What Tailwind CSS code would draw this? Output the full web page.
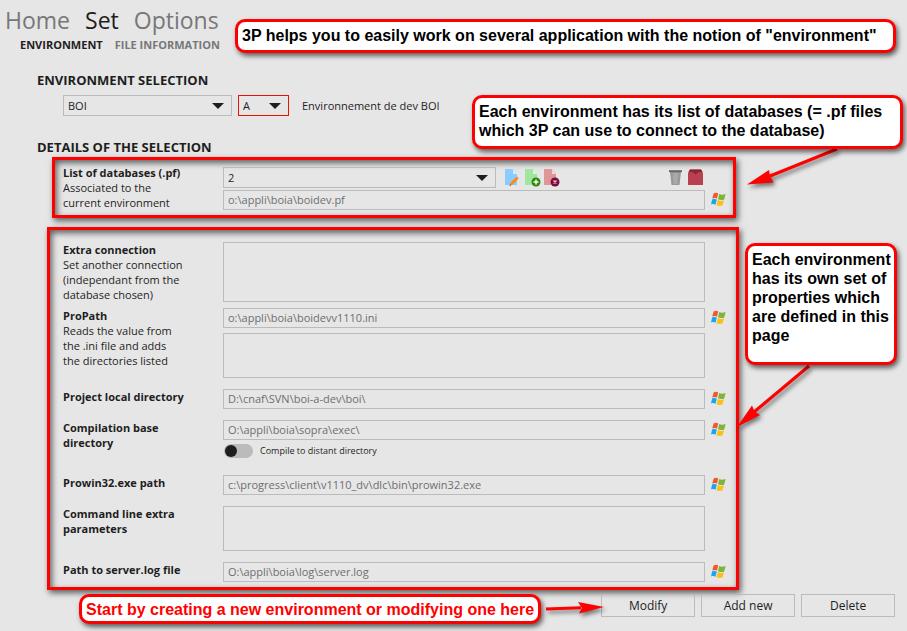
<!DOCTYPE html>
<html lang="en">
<head>
<meta charset="utf-8">
<meta name="viewport" content="width=device-width, initial-scale=1">
<title>3P - Set environment</title>
<script src="https://cdn.jsdelivr.net/npm/@tailwindcss/browser@4"></script>
</head>
<body class="relative min-h-screen bg-[#e6e6e6] font-['Open_Sans',sans-serif] text-[11px] leading-[15px] text-[#1e1e1e]">

<svg class="hidden" aria-hidden="true">
  <symbol id="win" viewBox="0 0 15 15">
    <path fill="#f0592b" d="M2.600 1.500C4.200.6 5.800.700 7.200 1.500L6 6.600C4.700 5.800 3 5.800 1.300 6.500Z"/>
    <path fill="#7cb43c" d="M8.200 2.100C10 3.100 12 3 14.600 2.100L13.200 7.400C11 8.300 9 8.200 7 7.200Z"/>
    <path fill="#18a5f5" d="M1.100 7.400C2.800 6.700 4.400 6.800 5.800 7.600L4.500 12.700C3 11.900 1.500 11.800 0 12.500Z"/>
    <path fill="#fcc115" d="M6.800 8.100C8.600 9.100 10.700 9.100 12.900 8.300L11.600 13.300C9.400 14.300 7.300 14.200 5.500 13.200Z"/>
  </symbol>
  <symbol id="caret" viewBox="0 0 12 6"><path fill="#1e1e1e" d="M0 0H12L6 6Z"/></symbol>
</svg>

<header class="pt-[3px] pl-[5px]">
  <nav class="flex gap-[15px] text-[23px] leading-[35px]">
    <a href="#" class="text-[#777]">Home</a>
    <a href="#" class="text-[#1e1e1e]">Set</a>
    <a href="#" class="text-[#777]">Options</a>
  </nav>
  <nav class="flex gap-3 pl-[15px] text-[11px] font-bold leading-[14px]">
    <a href="#">ENVIRONMENT</a>
    <a href="#" class="text-[#777]">FILE INFORMATION</a>
  </nav>
</header>

<main>
  <h1 class="mt-[18px] ml-[37px] text-[13px] font-bold leading-[20px]">ENVIRONMENT SELECTION</h1>
  <div class="mt-[5px] ml-[63px] flex items-center gap-[6px]">
    <div class="grid w-[169px] items-center">
      <select aria-label="Environment" class="col-start-1 row-start-1 h-[21px] appearance-none border border-[#bbb] px-1"><option>BOI</option></select>
      <svg class="pointer-events-none col-start-1 row-start-1 mr-2 h-[6px] w-3 justify-self-end"><use href="#caret"/></svg>
    </div>
    <div class="grid w-[51px] items-center">
      <select aria-label="Environment suffix" class="col-start-1 row-start-1 h-[21px] appearance-none border border-[#e51400] px-1"><option>A</option></select>
      <svg class="pointer-events-none col-start-1 row-start-1 mr-2 h-[6px] w-3 justify-self-end"><use href="#caret"/></svg>
    </div>
    <p class="ml-[7px]">Environnement de dev BOI</p>
  </div>

  <h2 class="mt-[21px] ml-[37px] text-[13px] font-bold leading-[20px]">DETAILS OF THE SELECTION</h2>

  <section class="mr-[171px] ml-[52px] grid grid-cols-[160px_1fr_20px] border-3 border-[red] pt-[5px] pr-[8px] pb-[5px] pl-[8px] shadow-[2px_3px_6px_rgba(0,0,0,0.6),inset_2px_3px_6px_rgba(0,0,0,0.6)]">
    <div>
      <label for="pf" class="block font-bold">List of databases (.pf)</label>
      <p>Associated to the<br>current environment</p>
    </div>
    <div class="flex flex-col gap-[2px] pt-[2px]">
      <div class="flex items-center">
        <div class="grid w-[273px] items-center">
          <select id="pf" class="col-start-1 row-start-1 h-[21px] appearance-none border border-[#bbb] px-1"><option>2</option></select>
          <svg class="pointer-events-none col-start-1 row-start-1 mr-2 h-[6px] w-3 justify-self-end"><use href="#caret"/></svg>
        </div>
        <div class="ml-[9px] flex gap-[2px]">
          <button aria-label="Edit">
            <svg class="block h-[18px] w-[17px]" viewBox="0 0 17 18"><path fill="#8accff" d="M0 0H8L12 4V16H0Z"/><path fill="#d3ecff" d="M8 0L12 4V5H8Z"/><path fill="#ff8c0a" d="M4.500 16.800L5.500 13.800L11 8.300L13 10.300L7.500 15.800Z"/><path fill="#f07c7c" d="M11 8.300L12 7.600L13.700 9.300L13 10.300Z"/><path fill="#444" d="M4.500 16.800L5 15.200L6.200 16.300Z"/></svg>
          </button>
          <button aria-label="Add">
            <svg class="block h-[18px] w-[17px]" viewBox="0 0 17 18"><path fill="#a0e6a0" d="M1 0H9L13 4V16H1Z"/><path fill="#d8f6d8" d="M9 0L13 4V5H9Z"/><circle cx="12" cy="13" r="4.500" fill="#2b8a0e"/><path stroke="#fff" stroke-width="1.500" d="M9.500 13H14.500M12 10.500V15.500"/></svg>
          </button>
          <button aria-label="Remove">
            <svg class="block h-[18px] w-[17px]" viewBox="0 0 17 18"><path fill="#df9696" d="M1 0H9L13 4V16H1Z"/><path fill="#f3d3d3" d="M9 0L13 4V5H9Z"/><circle cx="12" cy="13" r="4.500" fill="#80083e"/><path stroke="#e8c8d6" stroke-width="1.400" d="M10.500 11.500L13.500 14.500M13.500 11.500L10.500 14.500"/></svg>
          </button>
        </div>
        <div class="ml-auto flex gap-1">
          <button aria-label="Delete file">
            <svg class="block h-[17px] w-[15px]" viewBox="0 0 15 17"><path fill="#999" d="M2 3H13L11.500 16H3.500Z"/><path fill="#aaa" d="M5 4H10L9.500 15H5.500Z"/><path fill="#666" d="M1 1.200H14V3.200H1Z"/></svg>
          </button>
          <button aria-label="Archive">
            <svg class="block h-[17px] w-[18px]" viewBox="0 0 18 17"><path fill="#b84050" d="M3 .5H14L16 4V16H1V4Z"/><path fill="#8d2634" d="M3 .5H14L15.500 3H11.500L8.500 5.500L5.500 3H1.500Z"/></svg>
          </button>
        </div>
      </div>
      <input disabled aria-label="Path of the .pf file" value="o:\appli\boia\boidev.pf" class="h-[20px] border border-[#bbb] px-1 pb-[2px] text-[#6e6e6e]">
    </div>
    <button aria-label="Browse .pf file" class="mb-[3px] ml-[6px] self-end"><svg class="block size-[15px]"><use href="#win"/></svg></button>
  </section>

  <section class="mt-[9px] mr-[168px] ml-[47px] flex flex-col gap-[11px] border-3 border-[red] pt-[12px] pr-[11px] pb-[5px] pl-[13px] shadow-[2px_3px_6px_rgba(0,0,0,0.6),inset_2px_3px_6px_rgba(0,0,0,0.6)]">
    <div class="-mb-[5px] grid grid-cols-[160px_1fr_20px]">
      <div>
        <label for="extra" class="block font-bold">Extra connection</label>
        <p>Set another connection<br>(independant from the<br>database chosen)</p>
      </div>
      <textarea id="extra" disabled class="h-[60px] resize-none border border-[#bbb] px-1"></textarea>
    </div>
    <div class="grid grid-cols-[160px_1fr_20px] items-start">
      <div>
        <label for="propath" class="block font-bold">ProPath</label>
        <p>Reads the value from<br>the .ini file and adds<br>the directories listed</p>
      </div>
      <div class="flex flex-col gap-[5px]">
        <input id="propath" disabled value="o:\appli\boia\boidevv1110.ini" class="h-[20px] border border-[#bbb] px-1 pb-[2px] text-[#6e6e6e]">
        <textarea aria-label="Additional directories" disabled class="h-[45px] resize-none border border-[#bbb] px-1"></textarea>
      </div>
      <button aria-label="Browse ProPath" class="mt-[2px] ml-[6px]"><svg class="block size-[15px]"><use href="#win"/></svg></button>
    </div>
    <div class="grid grid-cols-[160px_1fr_20px] items-start">
      <label for="local" class="font-bold">Project local directory</label>
      <input id="local" disabled value="D:\cnaf\SVN\boi-a-dev\boi\" class="h-[20px] border border-[#bbb] px-1 pb-[2px] text-[#6e6e6e]">
      <button aria-label="Browse project directory" class="mt-[2px] ml-[6px]"><svg class="block size-[15px]"><use href="#win"/></svg></button>
    </div>
    <div class="mb-[6px] grid grid-cols-[160px_1fr_20px] items-start">
      <label for="base" class="font-bold">Compilation base<br>directory</label>
      <div class="flex flex-col gap-1">
        <input id="base" disabled value="O:\appli\boia\sopra\exec\" class="h-[20px] border border-[#bbb] px-1 pb-[2px] text-[#6e6e6e]">
        <div class="flex h-[14px] items-center gap-[7px] pl-px text-[9px] leading-[14px]">
          <input id="distant" type="checkbox" class="h-[14px] w-[29px] appearance-none rounded-full bg-[#bbb] p-px before:block before:size-[12px] before:rounded-full before:bg-[#1e1e1e] before:content-['']">
          <label for="distant">Compile to distant directory</label>
        </div>
      </div>
      <button aria-label="Browse compilation directory" class="mt-[2px] ml-[6px]"><svg class="block size-[15px]"><use href="#win"/></svg></button>
    </div>
    <div class="grid grid-cols-[160px_1fr_20px] items-start">
      <label for="prowin" class="font-bold">Prowin32.exe path</label>
      <input id="prowin" disabled value="c:\progress\client\v1110_dv\dlc\bin\prowin32.exe" class="h-[20px] border border-[#bbb] px-1 pb-[2px] text-[#6e6e6e]">
      <button aria-label="Browse Prowin32.exe" class="mt-[2px] ml-[6px]"><svg class="block size-[15px]"><use href="#win"/></svg></button>
    </div>
    <div class="grid grid-cols-[160px_1fr_20px] items-start">
      <label for="cmd" class="font-bold">Command line extra<br>parameters</label>
      <textarea id="cmd" disabled class="h-[45px] resize-none border border-[#bbb] px-1"></textarea>
    </div>
    <div class="grid grid-cols-[160px_1fr_20px] items-start">
      <label for="log" class="font-bold">Path to server.log file</label>
      <input id="log" disabled value="O:\appli\boia\log\server.log" class="h-[20px] border border-[#bbb] px-1 pb-[2px] text-[#6e6e6e]">
      <button aria-label="Browse server.log" class="mt-[2px] ml-[6px]"><svg class="block size-[15px]"><use href="#win"/></svg></button>
    </div>
  </section>

  <div class="mt-1 mr-[12px] ml-[79px] flex items-start gap-[6px] text-[12px]">
    <p class="rounded-[10px] border-3 border-[red] bg-white px-[4px] pt-[3px] pb-[2px] font-['Liberation_Sans',sans-serif] text-[16px] font-bold leading-[19px] whitespace-nowrap text-[red] shadow-[2px_3px_5px_rgba(0,0,0,0.6)]">Start by creating a new environment or modifying one here</p>
    <div class="z-10 -mr-[10px] -ml-1 flex flex-1 justify-end pt-[5px]">
      <svg class="h-[20px] w-[62px] shrink-0 drop-shadow-[2px_3px_2px_rgba(0,0,0,0.5)]" viewBox="0 0 62 20"><path stroke="red" stroke-width="3" d="M3 10L38 8.800"/><path fill="red" d="M61 8L35 3L39 9L36 14.500Z"/></svg>
    </div>
    <button class="h-[23px] w-[94px] shrink-0 border border-[#bbb]">Modify</button>
    <button class="h-[23px] w-[94px] shrink-0 border border-[#bbb]">Add new</button>
    <button class="h-[23px] w-[94px] shrink-0 border border-[#bbb]">Delete</button>
  </div>
</main>

<aside class="font-['Liberation_Sans',sans-serif] text-[16px] font-bold leading-[19px] text-black">
  <svg class="absolute top-[145px] right-[62px] h-[50px] w-[105px] drop-shadow-[2px_3px_2px_rgba(0,0,0,0.5)]" viewBox="0 0 105 50"><path stroke="red" stroke-width="3" d="M97 4L30 31"/><path fill="red" d="M7 39.500L29 25L30 31L33.500 37.500Z"/></svg>
  <svg class="absolute top-[360px] right-[87px] h-[75px] w-[90px] drop-shadow-[2px_3px_2px_rgba(0,0,0,0.5)]" viewBox="0 0 90 75"><path stroke="red" stroke-width="3" d="M79 6L24 52"/><path fill="red" d="M7 67L22 45.500L24.500 51.500L30 55Z"/></svg>
  <p class="absolute top-[19px] right-[11px] w-[661px] rounded-[10px] border-3 border-[red] bg-white px-[4px] pt-[4px] pb-[5px] shadow-[2px_3px_5px_rgba(0,0,0,0.6)]">3P helps you to easily work on several application with the notion of "environment"</p>
  <p class="absolute top-[95px] right-[4px] w-[431px] rounded-[10px] border-3 border-[red] bg-white px-[4px] pt-[4px] pb-[6px] shadow-[2px_3px_5px_rgba(0,0,0,0.6)]">Each environment has its list of databases (= .pf files<br>which 3P can use to connect to the database)</p>
  <p class="absolute top-[243px] right-[10px] w-[152px] rounded-[10px] border-3 border-[red] bg-white pt-[4px] pb-[17px] pl-[4px] shadow-[2px_3px_5px_rgba(0,0,0,0.6)]">Each environment<br>has its own set of<br>properties which<br>are defined in this<br>page</p>
</aside>
</body>
</html>
